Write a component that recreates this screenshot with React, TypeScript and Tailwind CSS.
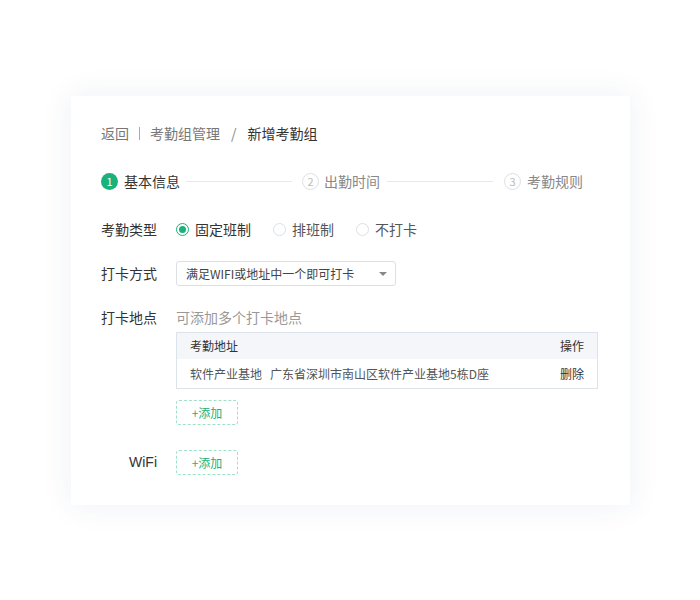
import React from "react";

const font = { fontFamily: '"Noto Sans CJK SC", "Noto Sans", sans-serif' };

function Radio({ checked, label }: { checked?: boolean; label: string }) {
  return (
    <div className="flex items-center">
      <span
        className={
          checked
            ? "shrink-0 w-[13px] h-[13px] rounded-full border border-[#19b27b] flex items-center justify-center"
            : "shrink-0 w-[13px] h-[13px] rounded-full border border-[#dcdfe6]"
        }
      >
        {checked && <span className="w-[7px] h-[7px] rounded-full bg-[#19b27b]" />}
      </span>
      <span className={checked ? "ml-[6px] text-[14px] text-[#333] whitespace-nowrap" : "ml-[6px] text-[14px] text-[#555] whitespace-nowrap"}>{label}</span>
    </div>
  );
}

function StepCircle({ n, active }: { n: number; active?: boolean }) {
  return active ? (
    <span className="shrink-0 w-[17px] h-[17px] rounded-full bg-[#19b27b] text-white text-[11px] flex items-center justify-center leading-none">
      {n}
    </span>
  ) : (
    <span className="shrink-0 w-[17px] h-[17px] rounded-full border border-[#dcdfe6] text-[#bbb] text-[11px] flex items-center justify-center leading-none">
      {n}
    </span>
  );
}

function AddButton() {
  return (
    <div className="w-[62px] h-[25px] border border-dashed border-[#9fe0c6] rounded-[3px] flex items-center justify-center text-[12px] text-[#19b27b]">
      +添加
    </div>
  );
}

function Label({ children, latin }: { children: React.ReactNode; latin?: boolean }) {
  return (
    <div
      className="shrink-0 w-[56px] text-right text-[14px] text-[#333] whitespace-nowrap"
      style={latin ? { fontFamily: '"Liberation Sans", "Noto Sans CJK SC", sans-serif' } : undefined}
    >
      {children}
    </div>
  );
}

export default function App() {
  return (
    <div className="w-[700px] h-[600px] bg-white pt-[96px] pl-[71px]" style={font}>
      <div className="w-[559px] h-[409px] bg-white shadow-[0_0_30px_rgba(40,60,120,0.08)] pl-[30px] pr-[32px] pt-[27px]">
        {/* breadcrumb */}
        <div className="flex items-center h-5 text-[14px] leading-5">
          <span className="text-[#777]">返回</span>
          <span className="mx-[10px] w-px h-[13px] bg-[#aaa]" />
          <span className="text-[#777]">考勤组管理</span>
          <span className="mx-[11px] text-[#888]">/</span>
          <span className="text-[#333]">新增考勤组</span>
        </div>

        {/* steps */}
        <div className="mt-[29px] flex items-center h-[18px] pr-[15px]">
          <StepCircle n={1} active />
          <span className="ml-[6px] text-[14px] text-[#333] whitespace-nowrap">基本信息</span>
          <span className="flex-1 h-px bg-[#e6e8eb] ml-[6px] mr-[10px]" />
          <StepCircle n={2} />
          <span className="ml-[5px] text-[14px] text-[#888] whitespace-nowrap">出勤时间</span>
          <span className="flex-1 h-px bg-[#e6e8eb] ml-[7px] mr-[11px]" />
          <StepCircle n={3} />
          <span className="ml-[6px] text-[14px] text-[#888] whitespace-nowrap">考勤规则</span>
        </div>

        {/* row 1 */}
        <div className="mt-[29px] flex items-center h-5">
          <Label>考勤类型</Label>
          <div className="ml-[19px] flex items-center gap-[22px]">
            <Radio checked label="固定班制" />
            <Radio label="排班制" />
            <Radio label="不打卡" />
          </div>
        </div>

        {/* row 2 */}
        <div className="mt-[22px] flex items-center h-[25px]">
          <Label>打卡方式</Label>
          <div className="ml-[19px] w-[220px] h-[25px] border border-[#dcdfe6] rounded-[3px] flex items-center justify-between pl-[9px] pr-[8px]">
            <span className="text-[12px] text-[#444] whitespace-nowrap">满足WIFI或地址中一个即可打卡</span>
            <span className="w-0 h-0 border-l-[4px] border-r-[4px] border-t-[4px] border-l-transparent border-r-transparent border-t-[#888]" />
          </div>
        </div>

        {/* row 3 */}
        <div className="mt-[21px] flex items-center h-5">
          <Label>打卡地点</Label>
          <div className="ml-[19px] text-[14px] text-[#999] whitespace-nowrap">可添加多个打卡地点</div>
        </div>

        <div className="ml-[75px] mt-[5px]">
          <div className="border border-[#dde3ea] text-[12px]">
            <div className="h-[26px] bg-[#f4f6f9] flex items-center justify-between pl-[13px] pr-[13px] text-[#333]">
              <span>考勤地址</span>
              <span>操作</span>
            </div>
            <div className="h-[29px] flex items-center justify-between pl-[13px] pr-[13px] text-[#555]">
              <span className="whitespace-nowrap">
                软件产业基地<span className="ml-[8px]">广东省深圳市南山区软件产业基地5栋D座</span>
              </span>
              <span className="text-[#333]">删除</span>
            </div>
          </div>
          <div className="mt-[11px]">
            <AddButton />
          </div>
        </div>

        {/* wifi */}
        <div className="mt-[25px] flex items-center h-[25px]">
          <Label latin>WiFi</Label>
          <div className="ml-[19px]">
            <AddButton />
          </div>
        </div>
      </div>
    </div>
  );
}
